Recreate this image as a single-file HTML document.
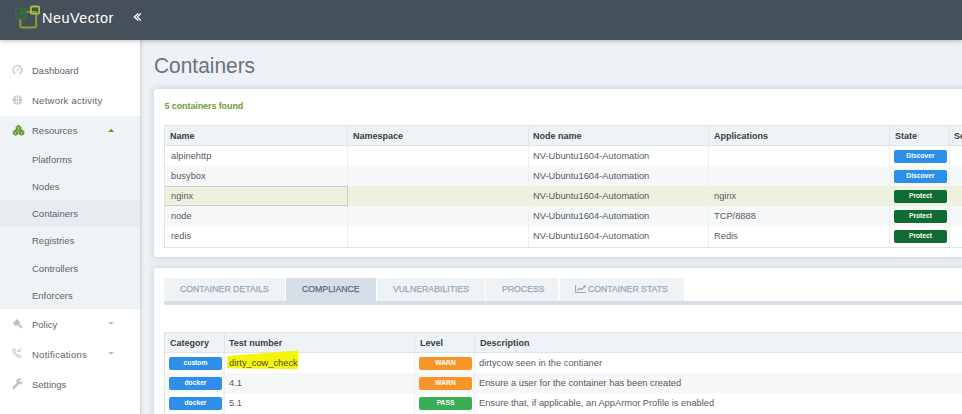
<!DOCTYPE html>
<html><head><meta charset="utf-8">
<style>
*{box-sizing:border-box;margin:0;padding:0}
html,body{width:962px;height:414px;overflow:hidden;background:#eef2f6;font-family:"Liberation Sans",sans-serif;position:relative}
.a{position:absolute}
#hdr{left:0;top:0;width:962px;height:40px;background:#46505b;box-shadow:0 1px 5px rgba(0,0,0,.25);z-index:5}
#brand{left:42px;top:9.5px;color:#fff;font-size:14.5px;letter-spacing:0.45px;line-height:17px}
#side{left:0;top:40px;width:141px;height:374px;background:#fff;border-right:1px solid #d3d9df;box-shadow:1px 0 3px rgba(150,165,180,.25)}
.nav{position:absolute;left:32px;color:#5b6470;font-size:9.5px;letter-spacing:0;line-height:12px;white-space:nowrap}
#title{left:154px;top:53px;font-size:22px;color:#6a737e;line-height:26px;transform:scaleX(0.95);transform-origin:0 0}
.card{position:absolute;background:#fff;border-radius:3px;box-shadow:0 0 6px 1px rgba(120,140,165,.3)}
#found{left:164.5px;top:100.6px;color:#6b9d35;font-size:9px;font-weight:bold;letter-spacing:-0.1px;line-height:11px}
.tbl{position:absolute;overflow:hidden}
.row{position:absolute;left:0;right:0;height:20px}
.c{position:absolute;top:0;height:20px;line-height:20px;font-size:9.3px;color:#555c64;white-space:nowrap}
.hd .c{font-weight:bold;color:#383d43;font-size:9px}
.vl{position:absolute;width:1px;background:#ecf0f4}
.badge{position:absolute;color:#fff;font-weight:bold;font-size:6.7px;text-align:center;border-radius:2px;width:53px;height:13px;line-height:12px}
.disc{background:#2b8fe9}
.prot{background:#0f6b31}
.warn{background:#f7952b}
.pass{background:#3aad55}
.cat{background:#2f8fe8}
.tab{position:absolute;top:278px;height:23px;background:#eff3f6;color:#9aa7b4;font-size:9.7px;line-height:23px;white-space:nowrap}
.tab span{position:absolute;top:-1px;-webkit-text-stroke:0.25px currentColor;transform:scaleX(0.9);transform-origin:0 0}
</style></head><body>
<div id="hdr" class="a">
  <svg class="a" style="left:0;top:0" width="42" height="40" viewBox="0 0 42 40">
    <rect x="20.3" y="11.9" width="15.9" height="15.6" rx="1.5" fill="none" stroke="#87a430" stroke-width="1.9"/>
    <rect x="30.9" y="6.5" width="8.2" height="7.2" rx="1" fill="none" stroke="#b4bc3d" stroke-width="1.8"/>
    <rect x="15.8" y="8.9" width="10.4" height="9.9" rx="0.8" fill="#46505b" stroke="#337530" stroke-width="1.3"/>
    <path d="M19.2 12.8 Q19.2 10.6 21.8 10.5 L26 9.6 L26 12.6 Q24.8 15.3 22.2 15.3 Q19.2 15.2 19.2 12.8 Z" fill="#337530"/>
    <path d="M17.6 16.6 L20.4 18.8 L17.2 18.8 Z M21.4 18.8 L26 15.2 L26 18.8 Z" fill="#337530"/>
  </svg>
  <div id="brand" class="a">NeuVector</div>
  <svg class="a" style="left:133px;top:13px" width="10" height="9" viewBox="0 0 10 9">
    <path d="M5.3 0.6 L1.3 4 L5.3 7.4 M8 0.4 L4.3 4 L8 7.6" fill="none" stroke="#fff" stroke-width="1.3"/>
  </svg>
</div>
<div id="side" class="a"></div>
<div class="a" style="left:0;top:116px;width:140px;height:193px;background:#f0f3f6"></div>
<div class="a" style="left:0;top:200px;width:140px;height:27px;background:#e8ecf0"></div>

<!-- sidebar icons -->
<svg class="a" style="left:0;top:40px" width="140" height="374" viewBox="0 40 140 374">
  <!-- gauge -->
  <path d="M15.54 73.99 A4.4 4.4 0 1 1 19.26 73.99" fill="none" stroke="#b4c4d1" stroke-width="1.25"/>
  <path d="M17.2 70.6 L19 68.9" stroke="#b4c4d1" stroke-width="1.3" stroke-linecap="round"/>
  <!-- globe -->
  <circle cx="17.4" cy="100.1" r="4.9" fill="#b4c4d1"/>
  <path d="M12.5 98.1 H22.5 M12.5 101.6 H22.5 M16.3 95 V105.2 M18.6 95 V105.2" stroke="#fff" stroke-width="0.75"/>
  <!-- cubes -->
  <path d="M15.60 129.85 L17.98 131.22 L17.98 133.97 L15.60 135.35 L13.22 133.97 L13.22 131.22 Z" fill="#5c9726" stroke="#5c9726" stroke-width="0.9" stroke-linejoin="round"/><path d="M13.69 131.50 L15.60 132.60 L17.51 131.50 M15.60 132.60 L15.60 134.80" stroke="#d8e6c8" stroke-width="0.55" fill="none"/><path d="M21.50 129.85 L23.88 131.22 L23.88 133.97 L21.50 135.35 L19.12 133.97 L19.12 131.22 Z" fill="#5c9726" stroke="#5c9726" stroke-width="0.9" stroke-linejoin="round"/><path d="M19.59 131.50 L21.50 132.60 L23.41 131.50 M21.50 132.60 L21.50 134.80" stroke="#d8e6c8" stroke-width="0.55" fill="none"/><path d="M18.55 125.35 L20.93 126.72 L20.93 129.47 L18.55 130.85 L16.17 129.47 L16.17 126.72 Z" fill="#5c9726" stroke="#5c9726" stroke-width="0.9" stroke-linejoin="round"/><path d="M16.64 127.00 L18.55 128.10 L20.46 127.00 M18.55 128.10 L18.55 130.30" stroke="#d8e6c8" stroke-width="0.55" fill="none"/>
  <path d="M108 132 L114.3 132 L111.15 128.7 Z" fill="#6a9e2e"/>
  <!-- gavel -->
  <g fill="#b4c4d1">
    <path d="M12.7 323.2 L17 318.9 L20.3 322.2 L16 326.5 Z"/>
    <path d="M17.5 324.6 L18.9 323.2 L22.6 327 L21.2 328.4 Z"/>
  </g>
  <path d="M108 322 L114 322 L111 325 Z" fill="#b4c4d1"/>
  <!-- phone -->
  <path d="M14 348.5 Q12.3 349.5 13.5 352.5 Q15.5 356.5 19 357.5 Q21 357.8 21.5 356.3 L19.5 354.8 L18.3 355.6 Q16.2 354.5 15.3 352.3 L16 351.2 Z" fill="none" stroke="#b4c4d1" stroke-width="1"/>
  <path d="M18.2 351.5 L21.5 348.2 M18.2 351.5 V349.3 M18.2 351.5 H20.4" stroke="#b4c4d1" stroke-width="1"/>
  <path d="M108 352 L114 352 L111 355 Z" fill="#b4c4d1"/>
  <!-- wrench -->
  <path d="M13.6 387.9 L18.2 383.3" stroke="#b4c4d1" stroke-width="2.2" stroke-linecap="round"/>
  <circle cx="19.4" cy="381.6" r="3" fill="#b4c4d1"/>
  <path d="M19.9 382.2 L23.6 380.5 L22.9 378.9 L19.2 380.6 Z" fill="#fff"/>
  </svg>

<div class="nav" style="top:64.5px">Dashboard</div>
<div class="nav" style="top:94.5px;letter-spacing:0.25px">Network activity</div>
<div class="nav" style="top:124.5px">Resources</div>
<div class="nav" style="top:153.5px">Platforms</div>
<div class="nav" style="top:180.5px">Nodes</div>
<div class="nav" style="top:207.5px">Containers</div>
<div class="nav" style="top:234.5px">Registries</div>
<div class="nav" style="top:262.5px">Controllers</div>
<div class="nav" style="top:289.5px">Enforcers</div>
<div class="nav" style="top:318.5px">Policy</div>
<div class="nav" style="top:348.5px;letter-spacing:0.25px">Notifications</div>
<div class="nav" style="top:378.5px">Settings</div>

<div id="title" class="a">Containers</div>

<!-- panel 1 -->
<div class="card" style="left:154px;top:89px;width:830px;height:168px"></div>
<div id="found" class="a">5 containers found</div>
<div class="tbl" style="left:164px;top:125px;width:798px;height:123px;border:1px solid #dde5ec;border-right:none">
  <div class="a" style="left:0;top:0;width:800px;height:20px;background:#eef3f7;border-bottom:1px solid #dde5ec"></div>
  <div class="a" style="left:0;top:40px;width:800px;height:20px;background:#f5f7f8"></div>
  <div class="a" style="left:0;top:60px;width:800px;height:20px;background:#edf1dd"></div>
  <div class="a" style="left:0;top:80px;width:800px;height:20px;background:#f5f7f8"></div>
  <div class="vl" style="left:182px;top:0;height:20px;background:#e0e7ed"></div><div class="vl" style="left:182px;top:20px;height:103px"></div>
  <div class="vl" style="left:363px;top:0;height:20px;background:#e0e7ed"></div><div class="vl" style="left:363px;top:20px;height:103px"></div>
  <div class="vl" style="left:543px;top:0;height:20px;background:#e0e7ed"></div><div class="vl" style="left:543px;top:20px;height:103px"></div>
  <div class="vl" style="left:724px;top:0;height:20px;background:#e0e7ed"></div><div class="vl" style="left:724px;top:20px;height:103px"></div>
  <div class="vl" style="left:784px;top:0;height:20px;background:#e0e7ed"></div><div class="vl" style="left:784px;top:20px;height:103px"></div>
  <div class="a" style="left:-1px;top:60px;width:184px;height:20px;border:1px solid #c3cfd3"></div>
  <div class="row hd" style="top:0">
    <div class="c" style="left:5px">Name</div><div class="c" style="left:188px">Namespace</div><div class="c" style="left:368px">Node name</div><div class="c" style="left:549px">Applications</div><div class="c" style="left:730px">State</div><div class="c" style="left:789px">Se</div>
  </div>
  <div class="row" style="top:20px"><div class="c" style="left:6px">alpinehttp</div><div class="c" style="left:368px">NV-Ubuntu1604-Automation</div><span class="badge disc" style="left:729px;top:4px">Discover</span></div>
  <div class="row" style="top:40px"><div class="c" style="left:6px">busybox</div><div class="c" style="left:368px">NV-Ubuntu1604-Automation</div><span class="badge disc" style="left:729px;top:4px">Discover</span></div>
  <div class="row" style="top:60px"><div class="c" style="left:6px">nginx</div><div class="c" style="left:368px">NV-Ubuntu1604-Automation</div><div class="c" style="left:549px">nginx</div><span class="badge prot" style="left:729px;top:4px">Protect</span></div>
  <div class="row" style="top:80px"><div class="c" style="left:6px">node</div><div class="c" style="left:368px">NV-Ubuntu1604-Automation</div><div class="c" style="left:549px">TCP/8888</div><span class="badge prot" style="left:729px;top:4px">Protect</span></div>
  <div class="row" style="top:100px"><div class="c" style="left:6px">redis</div><div class="c" style="left:368px">NV-Ubuntu1604-Automation</div><div class="c" style="left:549px">Redis</div><span class="badge prot" style="left:729px;top:4px">Protect</span></div>
</div>

<!-- panel 2 -->
<div class="card" style="left:154px;top:268px;width:830px;height:200px"></div>
<div class="tab" style="left:164px;width:121px"><span style="left:16px">CONTAINER DETAILS</span></div>
<div class="tab" style="left:286px;width:90px;background:#d6dfe7;color:#606974"><span style="left:16px">COMPLIANCE</span></div>
<div class="tab" style="left:377px;width:108px"><span style="left:16px">VULNERABILITIES</span></div>
<div class="tab" style="left:486px;width:72px"><span style="left:16px">PROCESS</span></div>
<div class="tab" style="left:560px;width:124px"><span style="left:28px">CONTAINER STATS</span>
  <svg class="a" style="left:15px;top:7px" width="12" height="9" viewBox="0 0 12 9"><path d="M0.5 0 V7.5 H11" fill="none" stroke="#9aa7b4" stroke-width="1"/><path d="M2 5.8 L4.5 3.3 L6.3 4.6 L9.8 1.2" fill="none" stroke="#9aa7b4" stroke-width="1.2"/><path d="M8 0.2 L10.8 0.2 L10.8 3 Z" fill="#9aa7b4"/></svg>
</div>
<div class="a" style="left:164px;top:301px;width:800px;height:4px;background:#d6dfe7"></div>

<div class="tbl" style="left:164px;top:332px;width:798px;height:90px;border:1px solid #dde5ec;border-right:none">
  <div class="a" style="left:0;top:0;width:800px;height:20px;background:#eef3f7;border-bottom:1px solid #dde5ec"></div>
  <div class="a" style="left:0;top:40px;width:800px;height:20px;background:#f5f7f8"></div>
  <div class="vl" style="left:59px;top:0;height:20px;background:#e0e7ed"></div><div class="vl" style="left:59px;top:20px;height:70px"></div>
  <div class="vl" style="left:249px;top:0;height:20px;background:#e0e7ed"></div><div class="vl" style="left:249px;top:20px;height:70px"></div>
  <div class="vl" style="left:309px;top:0;height:20px;background:#e0e7ed"></div><div class="vl" style="left:309px;top:20px;height:70px"></div>
  <svg class="a" style="left:0;top:0" width="300" height="60"><path d="M62.5 23 L100 20 L133.5 17.5 L133 36.3 L100 35.8 L62 35.2 Z" fill="#f5f50a"/></svg>
  <div class="row hd" style="top:0"><div class="c" style="left:5px">Category</div><div class="c" style="left:64px">Test number</div><div class="c" style="left:255px">Level</div><div class="c" style="left:315px">Description</div></div>
  <div class="row" style="top:20px"><span class="badge cat" style="left:4px;top:4px">custom</span><div class="c" style="left:64px;color:#4b4f2a">dirty_cow_check</div><span class="badge warn" style="left:254px;top:4px">WARN</span><div class="c" style="left:314px">dirtycow seen in the contianer</div></div>
  <div class="row" style="top:40px"><span class="badge cat" style="left:4px;top:4px">docker</span><div class="c" style="left:64px">4.1</div><span class="badge warn" style="left:254px;top:4px">WARN</span><div class="c" style="left:314px">Ensure a user for the container has been created</div></div>
  <div class="row" style="top:60px"><span class="badge cat" style="left:4px;top:4px">docker</span><div class="c" style="left:64px">5.1</div><span class="badge pass" style="left:254px;top:4px">PASS</span><div class="c" style="left:314px">Ensure that, if applicable, an AppArmor Profile is enabled</div></div>
</div>
</body></html>
